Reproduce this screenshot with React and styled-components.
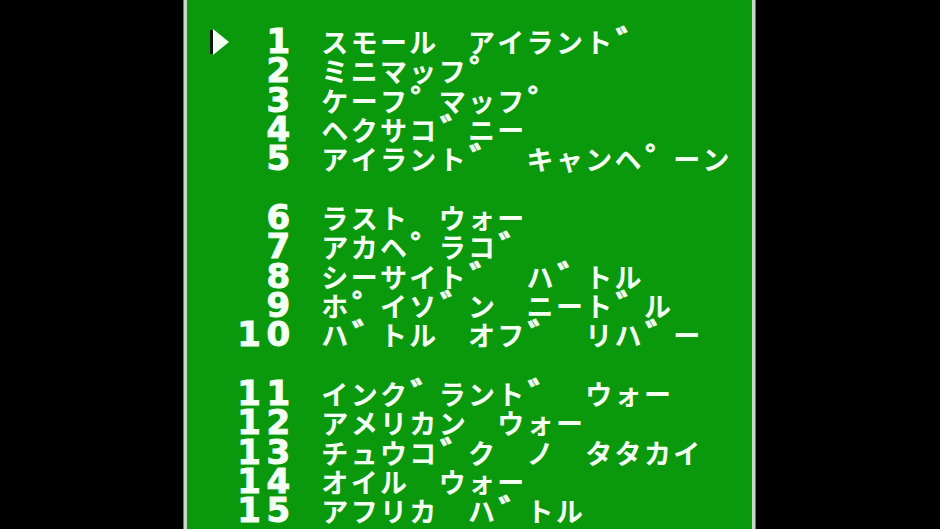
import React from "react";
import styled, { createGlobalStyle } from "styled-components";

const CELL = 29.33;

const GlobalStyle = createGlobalStyle`
  html, body {
    margin: 0;
    padding: 0;
    background: #000;
  }
  body {
    font-family: "Noto Sans CJK JP", "DejaVu Sans", sans-serif;
  }
`;

const Screen = styled.div`
  width: 940px;
  height: 529px;
  background: #000;
  display: flex;
  justify-content: center;
  overflow: hidden;
`;

const Panel = styled.div`
  box-sizing: border-box;
  width: 571px;
  height: 529px;
  margin-left: -1px;
  background: #0a980c;
  border-left: 3px solid #c8d8c8;
  border-right: 3px solid #c8d8c8;
  box-shadow: -1px 0 0 #6a7a6a, 1px 0 0 #6a7a6a;
  padding: 27px 0 0 18px;
`;

const Menu = styled.div`
  display: flex;
  flex-direction: column;
`;

const Row = styled.div`
  display: flex;
  height: ${CELL}px;
`;

const Cell = styled.span`
  width: ${CELL}px;
  height: ${CELL}px;
  flex: none;
  display: flex;
  align-items: center;
  justify-content: center;
  color: #f4fff4;
  line-height: ${CELL}px;
`;

const Digit = styled(Cell)`
  font-family: "DejaVu Sans", sans-serif;
  font-weight: 700;
  font-size: 34px;
  -webkit-text-stroke: 1px #f4fff4;
`;

const Kana = styled(Cell)`
  font-family: "Noto Sans CJK JP", sans-serif;
  font-weight: 700;
  font-size: 27px;
  justify-content: flex-start;
  text-indent: -1px;
`;

const Mark = styled(Cell)`
  font-family: "Noto Sans CJK JP", sans-serif;
  font-weight: 700;
  font-size: 36px;
  justify-content: flex-start;
  -webkit-text-stroke: 0.6px #f4fff4;
`;

const Cursor = () => (
  <svg width="20" height="26" viewBox="0 0 20 26">
    <polygon points="0,1 4,1 4,25 0,25" fill="#101810" />
    <polygon points="3,0 19,13 3,26" fill="#f4fff4" />
  </svg>
);

const rows = [
  { num: 1, text: "スモール アイラント゛", selected: true },
  { num: 2, text: "ミニマッフ゜" },
  { num: 3, text: "ケーフ゜マッフ゜" },
  { num: 4, text: "ヘクサコ゛ニー" },
  { num: 5, text: "アイラント゛ キャンヘ゜ーン" },
  null,
  { num: 6, text: "ラスト ウォー" },
  { num: 7, text: "アカヘ゜ラコ゛" },
  { num: 8, text: "シーサイト゛ ハ゛トル" },
  { num: 9, text: "ホ゜イソ゛ン ニート゛ル" },
  { num: 10, text: "ハ゛トル オフ゛ リハ゛ー" },
  null,
  { num: 11, text: "インク゛ラント゛ ウォー" },
  { num: 12, text: "アメリカン ウォー" },
  { num: 13, text: "チュウコ゛ク ノ タタカイ" },
  { num: 14, text: "オイル ウォー" },
  { num: 15, text: "アフリカ ハ゛トル" },
];

const isMark = (ch) => ch === "゛" || ch === "゜";

const MenuRow = ({ item }) => {
  if (!item) return <Row />;
  const digits = String(item.num).padStart(2, " ").split("");
  return (
    <Row>
      <Cell>{item.selected && <Cursor />}</Cell>
      {digits.map((d, i) => (
        <Digit key={i}>{d.trim()}</Digit>
      ))}
      <Cell />
      {Array.from(item.text).map((ch, i) =>
        isMark(ch) ? (
          <Mark key={i}>{ch}</Mark>
        ) : (
          <Kana key={i}>{ch === " " ? "" : ch}</Kana>
        )
      )}
    </Row>
  );
};

const App = () => {
  return (
    <>
      <GlobalStyle />
      <Screen>
        <Panel>
          <Menu>
            {rows.map((item, i) => (
              <MenuRow key={i} item={item} />
            ))}
          </Menu>
        </Panel>
      </Screen>
    </>
  );
};

export default App;
